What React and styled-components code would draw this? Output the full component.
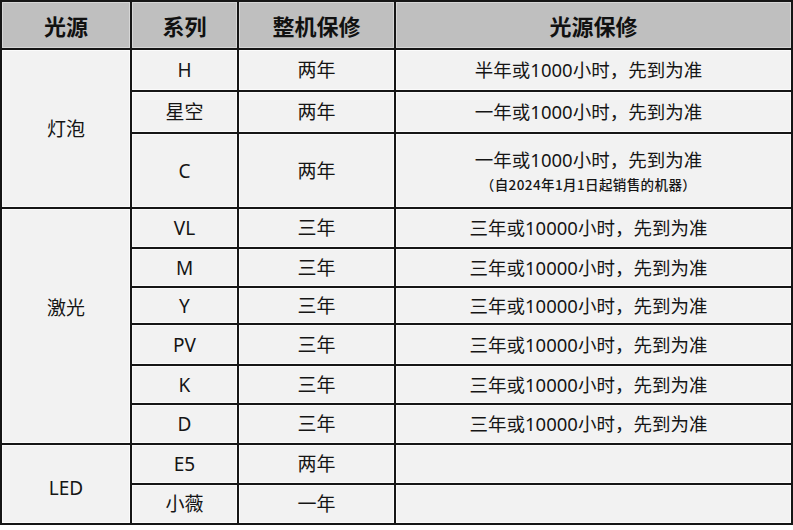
import React from 'react';
import styled, { createGlobalStyle } from 'styled-components';

const GlobalStyle = createGlobalStyle`
  html, body {
    margin: 0;
    padding: 0;
    background: #fff;
  }
  body {
    font-family: "Noto Sans", "Noto Sans CJK SC", sans-serif;
    color: #151515;
  }
`;

const groups = [
  {
    source: '灯泡',
    shift: 0,
    rows: [
      { series: 'H', machine: '两年', light: '半年或1000小时，先到为准', h: 42 },
      { series: '星空', machine: '两年', light: '一年或1000小时，先到为准', h: 42 },
      {
        series: 'C',
        machine: '两年',
        light: '一年或1000小时，先到为准',
        note: '（自2024年1月1日起销售的机器）',
        h: 75,
      },
    ],
  },
  {
    source: '激光',
    shift: -36,
    rows: [
      { series: 'VL', machine: '三年', light: '三年或10000小时，先到为准', h: 40 },
      { series: 'M', machine: '三年', light: '三年或10000小时，先到为准', h: 39 },
      { series: 'Y', machine: '三年', light: '三年或10000小时，先到为准', h: 37 },
      { series: 'PV', machine: '三年', light: '三年或10000小时，先到为准', h: 41 },
      { series: 'K', machine: '三年', light: '三年或10000小时，先到为准', h: 39 },
      { series: 'D', machine: '三年', light: '三年或10000小时，先到为准', h: 40 },
    ],
  },
  {
    source: 'LED',
    shift: 8,
    rows: [
      { series: 'E5', machine: '两年', light: '', h: 40 },
      { series: '小薇', machine: '一年', light: '', h: 40 },
    ],
  },
];

const App = () => {
  return (
    <>
      <GlobalStyle />
      <Table>
        <colgroup>
          <col style={{ width: 130 }} />
          <col style={{ width: 107 }} />
          <col style={{ width: 157 }} />
          <col />
        </colgroup>
        <thead>
          <HeadRow>
            <HeadCell>光源</HeadCell>
            <HeadCell>系列</HeadCell>
            <HeadCell>整机保修</HeadCell>
            <HeadCell>光源保修</HeadCell>
          </HeadRow>
        </thead>
        <tbody>
          {groups.map(group =>
            group.rows.map((row, i) => (
              <Row key={group.source + row.series} $h={row.h}>
                {i === 0 && (
                  <SourceCell rowSpan={group.rows.length} $shift={group.shift}>
                    {group.source}
                  </SourceCell>
                )}
                <Cell>{row.series}</Cell>
                <Cell>{row.machine}</Cell>
                <WarrantyCell>
                  {row.light}
                  {row.note && <Note>{row.note}</Note>}
                </WarrantyCell>
              </Row>
            ))
          )}
        </tbody>
      </Table>
    </>
  );
};
export default App;

const Table = styled.table`
  width: 793px;
  table-layout: fixed;
  border-collapse: collapse;
  border: 2px solid #161616;
`;
const HeadRow = styled.tr`
  height: 48px;
`;
const Row = styled.tr`
  height: ${p => p.$h}px;
`;
const Cell = styled.td`
  border: 2px solid #161616;
  background: #f2f2f2;
  box-shadow: inset 0 0 0 1px #fbfbfb;
  padding: 0;
  text-align: center;
  vertical-align: middle;
  font-size: 19px;
  line-height: 22px;
  color: #151515;
`;
const WarrantyCell = styled(Cell)`
  font-size: 18.5px;
  padding-right: 10px;
`;
const HeadCell = styled.th`
  border: 2px solid #161616;
  background: #bfbfbf;
  box-shadow: inset 0 0 0 1px #d6d6d6;
  padding: 0;
  text-align: center;
  vertical-align: middle;
  font-family: "Noto Sans CJK SC", sans-serif;
  font-size: 22px;
  font-weight: 700;
  color: #111;
`;
const SourceCell = styled(Cell)`
  padding-top: ${p => (p.$shift > 0 ? p.$shift : 0)}px;
  padding-bottom: ${p => (p.$shift < 0 ? -p.$shift : 0)}px;
`;
const Note = styled.div`
  margin-top: 5px;
  font-family: "Noto Sans CJK SC", sans-serif;
  font-size: 13.5px;
  line-height: 16px;
  font-weight: 500;
  letter-spacing: 0.4px;
`;
